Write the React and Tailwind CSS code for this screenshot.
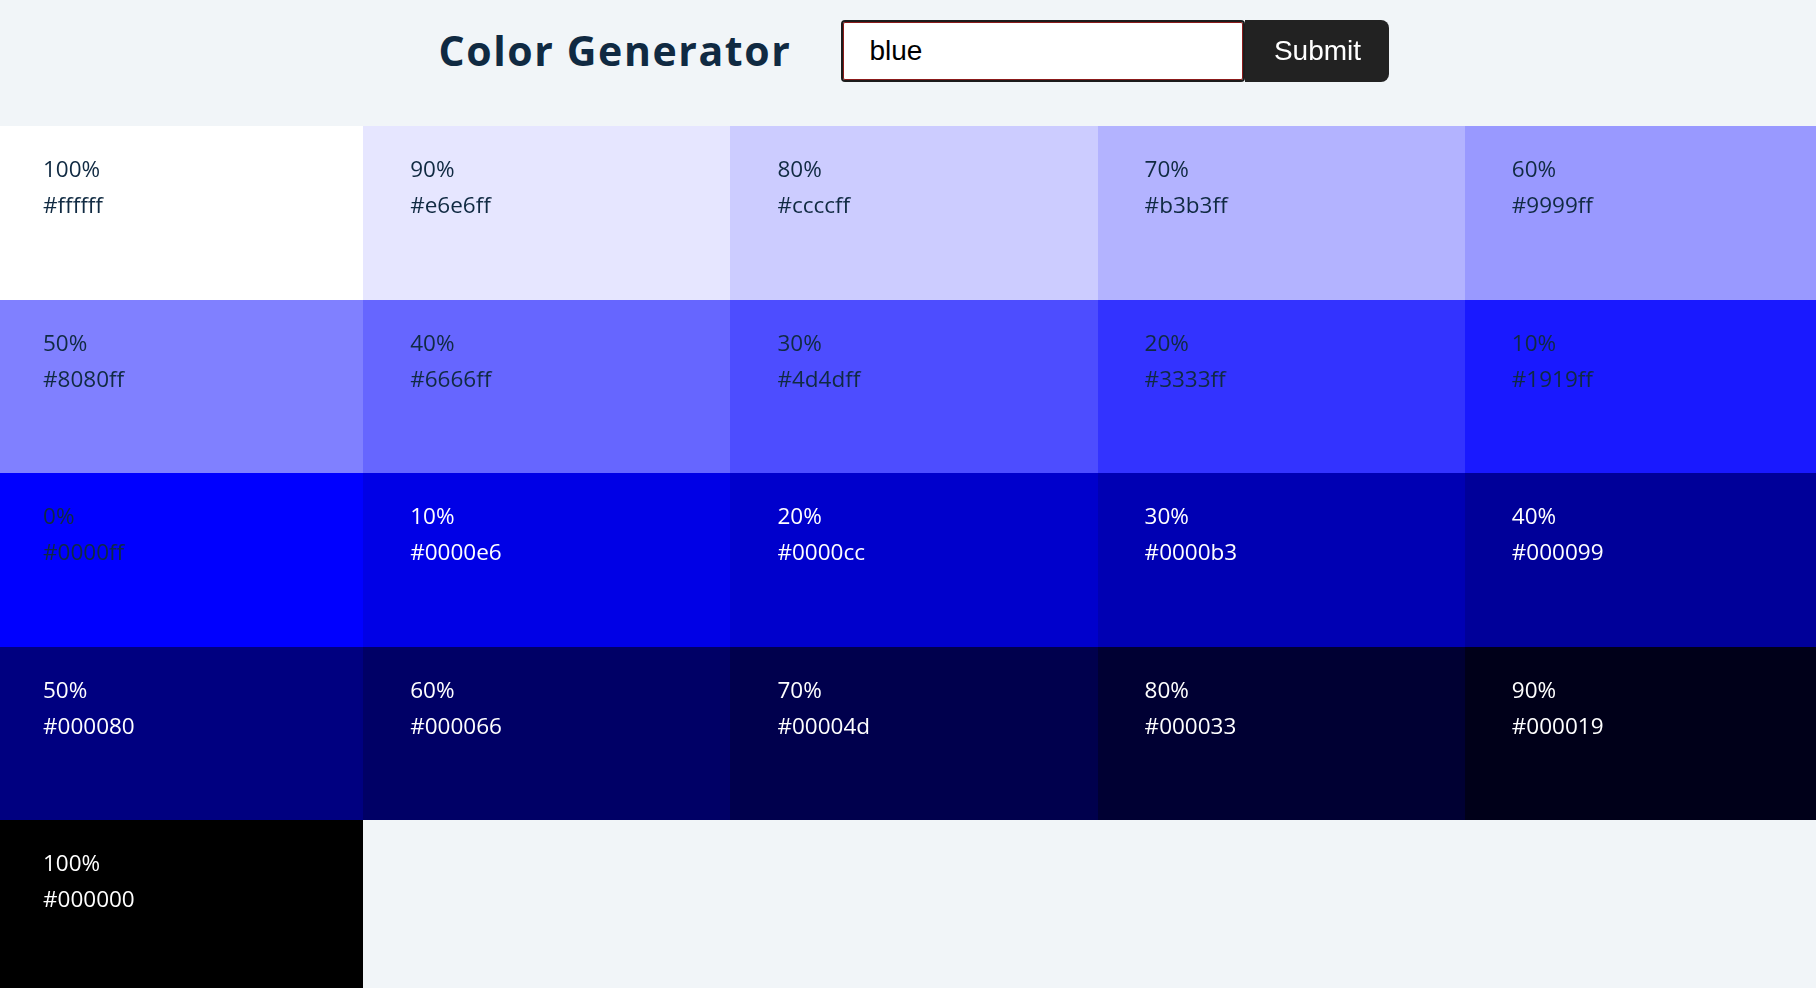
import React, { useState } from "react";

// tints and shades of #0000ff, 10% steps
const colors = [
  { weight: 100, hex: "ffffff" },
  { weight: 90, hex: "e6e6ff" },
  { weight: 80, hex: "ccccff" },
  { weight: 70, hex: "b3b3ff" },
  { weight: 60, hex: "9999ff" },
  { weight: 50, hex: "8080ff" },
  { weight: 40, hex: "6666ff" },
  { weight: 30, hex: "4d4dff" },
  { weight: 20, hex: "3333ff" },
  { weight: 10, hex: "1919ff" },
  { weight: 0, hex: "0000ff" },
  { weight: 10, hex: "0000e6" },
  { weight: 20, hex: "0000cc" },
  { weight: 30, hex: "0000b3" },
  { weight: 40, hex: "000099" },
  { weight: 50, hex: "000080" },
  { weight: 60, hex: "000066" },
  { weight: 70, hex: "00004d" },
  { weight: 80, hex: "000033" },
  { weight: 90, hex: "000019" },
  { weight: 100, hex: "000000" },
];

function SingleColor({ weight, hex, index }) {
  const light = index > 10;
  return (
    <article
      className={`pt-[25px] pl-[47px] text-[22.5px] leading-[36px] ${light ? "text-white" : "text-[#102a42]"}`}
      style={{ backgroundColor: `#${hex}` }}
    >
      <p>{weight}%</p>
      <p>#{hex}</p>
    </article>
  );
}

export default function App() {
  const [color, setColor] = useState("blue");

  return (
    <div className="h-screen overflow-hidden bg-[#f1f5f8] font-['Open_Sans',sans-serif]">
      {/* page is a bit wider than the window, nudged left */}
      <div className="-ml-1 w-[1836px]">
        <section className="flex h-[126px] items-start justify-center gap-[50px] pt-5">
          <h3 className="h-[62px] flex items-center text-[41px] font-bold tracking-[1.6px] text-[#102a42]">
            Color Generator
          </h3>
          <form className="flex" onSubmit={(e) => e.preventDefault()}>
            <input
              type="text"
              value={color}
              autoFocus
              onChange={(e) => setColor(e.target.value)}
              className="h-[62px] w-[404px] rounded-[4px] border-2 border-[#1c1c1c] bg-white pl-[26px] font-['Liberation_Sans',Arial,sans-serif] text-[28px] text-black caret-black shadow-[inset_0_0_0_1px_#8b1a1a] outline-none"
            />
            <button
              type="submit"
              className="h-[62px] w-[144px] rounded-r-[8px] bg-[#222222] font-['Liberation_Sans',Arial,sans-serif] text-[28px] text-white"
            >
              Submit
            </button>
          </form>
        </section>
        <section className="grid grid-cols-5 auto-rows-[173.5px]">
          {colors.map((c, index) => (
            <SingleColor key={index} {...c} index={index} />
          ))}
        </section>
      </div>
    </div>
  );
}
